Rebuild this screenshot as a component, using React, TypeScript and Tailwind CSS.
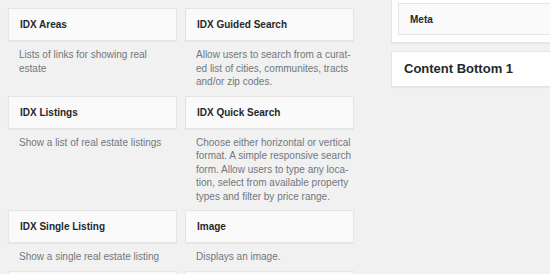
import React from 'react';

interface Widget {
  title: string;
  lines: string[];
}

const WIDGETS: Widget[] = [
  { title: 'IDX Areas', lines: ['Lists of links for showing real', 'estate'] },
  {
    title: 'IDX Guided Search',
    lines: ['Allow users to search from a curat-', 'ed list of cities, communites, tracts', 'and/or zip codes.'],
  },
  { title: 'IDX Listings', lines: ['Show a list of real estate listings'] },
  {
    title: 'IDX Quick Search',
    lines: [
      'Choose either horizontal or vertical',
      'format. A simple responsive search',
      'form. Allow users to type any loca-',
      'tion, select from available property',
      'types and filter by price range.',
    ],
  },
  { title: 'IDX Single Listing', lines: ['Show a single real estate listing'] },
  { title: 'Image', lines: ['Displays an image.'] },
  // next row only shows the top edge of its cards
  { title: '', lines: [] },
  { title: '', lines: [] },
];

const WidgetItem: React.FC<{ w: Widget }> = ({ w }) => (
  <div>
    <div className="h-[33px] flex items-center px-[11px] bg-[#fafafa] border border-[#e5e5e5] shadow-[0_1px_1px_rgba(0,0,0,0.04)]">
      <span className="text-[10px] font-semibold text-[#23282d]">{w.title}</span>
    </div>
    <div className="px-[11px] py-[7px] text-[10px] leading-[13.5px] text-[#72777c]">
      {w.lines.map((l, i) => (
        <div key={i} className="whitespace-nowrap">{l}</div>
      ))}
    </div>
  </div>
);

export default function App() {
  return (
    <div
      className="w-[550px] h-[274px] overflow-hidden bg-[#f1f1f1] flex"
      style={{ fontFamily: '"Liberation Sans", Arial, sans-serif' }}
    >
      <div className="w-[354px] flex-none pl-[8px] pt-[8px]">
        <div className="grid grid-cols-[169px_169px] gap-x-[8px]">
          {WIDGETS.map((w, i) => (
            <WidgetItem key={i} w={w} />
          ))}
        </div>
      </div>

      <div className="ml-[37px] w-[220px] flex-none flex flex-col gap-[8px]">
        <div className="bg-white border-x border-b border-[#e5e5e5] pt-[3px] pl-[6px] pb-[7px] shadow-[0_1px_1px_rgba(0,0,0,0.04)]">
          <div className="h-[32px] flex items-center px-[11px] bg-[#fafafa] border border-r-0 border-[#e5e5e5]">
            <span className="text-[10px] font-semibold text-[#23282d]">Meta</span>
          </div>
        </div>
        <div className="h-[36px] flex items-center px-[12px] bg-white border border-r-0 border-[#e5e5e5] shadow-[0_1px_1px_rgba(0,0,0,0.04)]">
          <span className="text-[13px] font-semibold text-[#23282d]">Content Bottom 1</span>
        </div>
      </div>
    </div>
  );
}
